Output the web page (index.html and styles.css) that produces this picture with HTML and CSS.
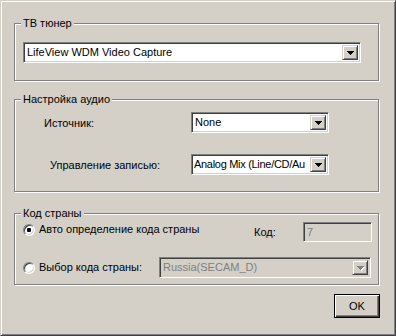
FILE: index.html
```html
<!DOCTYPE html>
<html lang="ru">
<head>
    <meta charset="UTF-8">
    <title>Свойства ТВ тюнера</title>
    <link rel="stylesheet" href="styles.css">
</head>
<body>
    <div class="dialog">
        <div class="group tuner">
            <div class="group-title">ТВ тюнер</div>
            <div class="combo tuner-combo">
                <span class="combo-text">LifeView WDM Video Capture</span>
                <span class="combo-btn"><svg width="7" height="4" viewBox="0 0 7 4"><path d="M0 0H7V1H6V2H5V3H4V4H3V3H2V2H1V1H0Z"/></svg></span>
            </div>
        </div>

        <div class="group audio">
            <div class="group-title">Настройка аудио</div>
            <div class="field-row first">
                <span class="field-label">Источник:</span>
                <div class="combo audio-combo">
                    <span class="combo-text">None</span>
                    <span class="combo-btn"><svg width="7" height="4" viewBox="0 0 7 4"><path d="M0 0H7V1H6V2H5V3H4V4H3V3H2V2H1V1H0Z"/></svg></span>
                </div>
            </div>
            <div class="field-row second">
                <span class="field-label indent">Управление записью:</span>
                <div class="combo audio-combo">
                    <span class="combo-text tight">Analog Mix (Line/CD/Au</span>
                    <span class="combo-btn"><svg width="7" height="4" viewBox="0 0 7 4"><path d="M0 0H7V1H6V2H5V3H4V4H3V3H2V2H1V1H0Z"/></svg></span>
                </div>
            </div>
        </div>

        <div class="group country">
            <div class="group-title">Код страны</div>
            <div class="country-row auto">
                <label class="option auto-option"><span class="radio checked"></span>Авто определение кода страны</label>
                <span class="code-label">Код:</span>
                <div class="edit disabled">7</div>
            </div>
            <div class="country-row manual">
                <label class="option manual-option"><span class="radio"></span>Выбор кода страны:</label>
                <div class="combo disabled country-combo">
                    <span class="combo-text">Russia(SECAM_D)</span>
                    <span class="combo-btn"><svg width="7" height="4" viewBox="0 0 7 4"><path d="M0 0H7V1H6V2H5V3H4V4H3V3H2V2H1V1H0Z"/></svg></span>
                </div>
            </div>
        </div>

        <div class="actions">
            <button class="btn default">OK</button>
        </div>
    </div>
</body>
</html>
```

FILE: styles.css
```css
* {
    box-sizing: border-box;
}
body {
    margin: 0;
    background: #d4d0c8;
    font-family: 'Liberation Sans', Arial, sans-serif;
    font-size: 11px;
    color: #000;
}
.dialog {
    width: 396px;
    height: 336px;
    background: #d4d0c8;
    border: 1px solid;
    border-color: #d4d0c8 #404040 #404040 #d4d0c8;
    box-shadow: inset 1px 1px 0 #fff, inset -1px -1px 0 #808080;
    padding: 22px 16px 0 13px;
    display: flex;
    flex-direction: column;
}

/* etched group boxes */
.group {
    border: 1px solid #808080;
    box-shadow: 1px 1px 0 #fff, inset 1px 1px 0 #fff;
}
.group-title {
    width: max-content;
    margin: -7px 0 0 6px;
    padding: 0 2px;
    line-height: 13px;
    background: #d4d0c8;
}
.tuner {
    padding-bottom: 17px;
}
.tuner-combo {
    margin: 12px 0 0 8px;
    width: 338px;
}
.audio {
    margin-top: 18px;
    padding-bottom: 16px;
}
.country {
    margin-top: 21px;
    padding-bottom: 6px;
}

/* combo boxes */
.combo {
    display: flex;
    height: 21px;
    background: #fff;
    border: 1px solid;
    border-color: #808080 #fff #fff #808080;
    box-shadow: inset 1px 1px 0 #404040, inset -1px -1px 0 #d4d0c8;
    padding: 2px;
}
.combo-text {
    flex: 1;
    min-width: 0;
    padding-left: 1px;
    line-height: 15px;
    overflow: hidden;
    white-space: nowrap;
}
.combo-text.tight {
    padding-left: 0;
    letter-spacing: -0.3px;
}
.combo-btn {
    width: 16px;
    display: flex;
    align-items: center;
    justify-content: center;
    background: #d4d0c8;
    border: 1px solid;
    border-color: #d4d0c8 #404040 #404040 #d4d0c8;
    box-shadow: inset 1px 1px 0 #fff, inset -1px -1px 0 #808080;
}
.combo-btn svg {
    fill: #000;
}
.combo.disabled {
    background: #d4d0c8;
    color: #808080;
}
.combo.disabled .combo-btn svg {
    fill: #808080;
    filter: drop-shadow(1px 1px 0 #fff);
}

/* audio rows */
.field-row {
    display: flex;
    align-items: center;
}
.field-row.first {
    margin-top: 6px;
}
.field-row.second {
    margin-top: 21px;
}
.field-label {
    width: 176px;
    padding-left: 29px;
}
.field-label.indent {
    padding-left: 35px;
}
.audio-combo {
    width: 138px;
}

/* country rows */
.country-row {
    display: flex;
    align-items: center;
    padding-left: 8px;
}
.country-row.auto {
    margin-top: 2px;
    height: 20px;
}
.country-row.manual {
    margin-top: 15px;
}
.option {
    display: flex;
    align-items: center;
    gap: 4px;
    line-height: 13px;
}
.auto-option {
    width: 231px;
    align-self: flex-start;
    margin-top: 1px;
}
.manual-option {
    width: 136px;
}
.radio {
    width: 12px;
    height: 12px;
    border-radius: 50%;
    background: #fff;
    border: 1px solid;
    border-color: #808080 #fff #fff #808080;
    box-shadow: inset 1px 1px 0 #404040, inset -1px -1px 0 #d4d0c8;
    display: flex;
    align-items: center;
    justify-content: center;
}
.radio.checked::after {
    content: '';
    width: 4px;
    height: 4px;
    border-radius: 1px;
    background: #000;
}
.code-label {
    width: 49px;
}
.edit {
    width: 69px;
    height: 20px;
    border: 1px solid;
    border-color: #808080 #fff #fff #808080;
    box-shadow: inset 1px 1px 0 #404040, inset -1px -1px 0 #d4d0c8;
    padding: 2px 0 0 3px;
    line-height: 14px;
    background: #fff;
}
.edit.disabled {
    background: #d4d0c8;
    color: #808080;
}
.country-combo {
    width: 212px;
}

/* buttons */
.actions {
    display: flex;
    justify-content: flex-end;
    margin-top: 9px;
    margin-right: -1px;
}
.btn {
    width: 46px;
    height: 24px;
    padding: 0;
    font: inherit;
    color: #000;
    background: #d4d0c8;
    border: 1px solid #000;
    box-shadow: inset 1px 1px 0 #fff, inset -1px -1px 0 #404040, inset -2px -2px 0 #808080;
}
```
